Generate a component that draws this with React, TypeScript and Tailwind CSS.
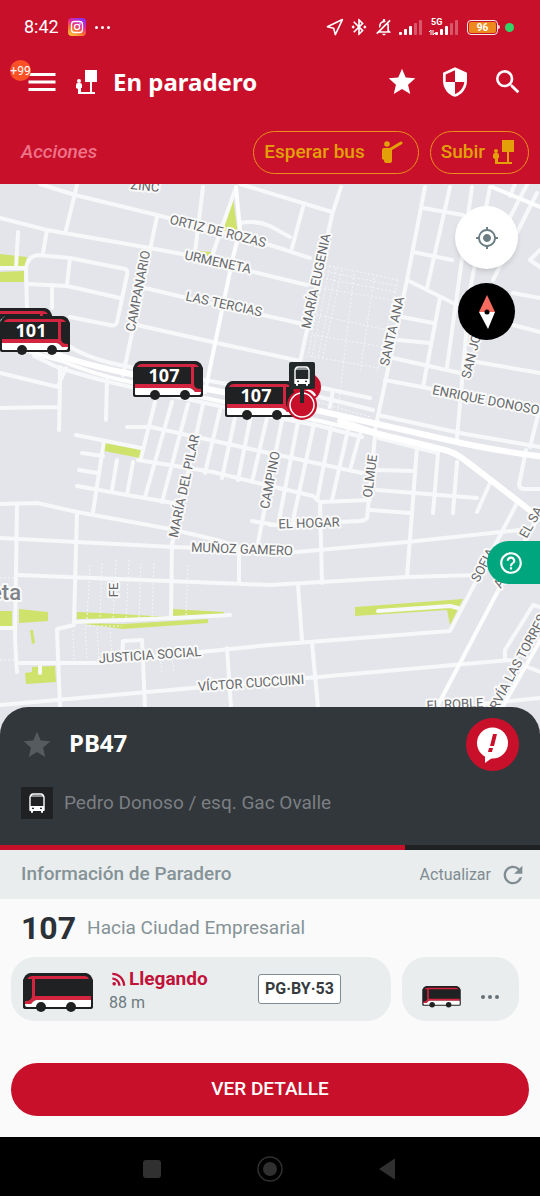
import React from 'react';
import {
  MdBluetoothConnected,
  MdHelpOutline,
  MdMenu,
  MdMyLocation,
  MdOutlineNotificationsOff,
  MdRefresh,
  MdRssFeed,
  MdSearch,
  MdSecurity,
  MdStar,
} from 'react-icons/md';
import { Navigation } from 'lucide-react';

interface MapLabel {
  text: string;
  x: number;
  y: number;
  angle: number;
}

const labels: MapLabel[] = [
  { text: 'ZINC', x: 145, y: 186, angle: 6 },
  { text: 'ORTIZ DE ROZAS', x: 218, y: 231, angle: 14 },
  { text: 'URMENETA', x: 218, y: 262, angle: 12 },
  { text: 'LAS TERCIAS', x: 224, y: 304, angle: 12 },
  { text: 'CAMPANARIO', x: 138, y: 291, angle: -79 },
  { text: 'MARÍA EUGENIA', x: 316, y: 281, angle: -78 },
  { text: 'SANTA ANA', x: 392, y: 331, angle: -77 },
  { text: 'SAN JOSÉ', x: 473, y: 349, angle: -76 },
  { text: 'ENRIQUE DONOSO', x: 486, y: 400, angle: 11 },
  { text: 'MARÍA DEL PILAR', x: 184, y: 486, angle: -78 },
  { text: 'CAMPINO', x: 270, y: 480, angle: -79 },
  { text: 'OLMUE', x: 370, y: 476, angle: -83 },
  { text: 'EL HOGAR', x: 309, y: 523, angle: -2 },
  { text: 'MUÑOZ GAMERO', x: 242, y: 549, angle: 2 },
  { text: 'FE', x: 113, y: 590, angle: -90 },
  { text: 'JUSTICIA SOCIAL', x: 150, y: 655, angle: -4 },
  { text: 'VÍCTOR CUCCUINI', x: 251, y: 683, angle: -4 },
  { text: 'SOFIA', x: 483, y: 565, angle: -62 },
  { text: 'EL SA', x: 531, y: 522, angle: -60 },
  { text: 'A', x: 499, y: 583, angle: -60 },
  { text: 'EL ROBLE', x: 455, y: 704, angle: -3 },
  { text: 'RVÍA LAS TORRES', x: 518, y: 662, angle: -62 },
];

const streets = [
  'M40 184L75 195L157 215L270 245L310 258',
  'M0 218L47 230L150 248L187 255L270 276L307 285',
  'M77 185L66 230M47 230L43 253M157 217L123 375M203 187L195 252',
  'M0 268H25M27 310L26 268Q28 256 38 255L70 258L125 269Q128 270 127 275L117 322Q116 327 110 325L70 317',
  'M27 284L67 286L120 298M70 258L67 285M52 287V308M18 232L16 268',
  'M145 288L187 298L303 324M137 325L217 343L300 361',
  'M235 190L213 253M240 223Q256 220 270 226L290 237M303 207L292 248M240 184L332 212',
  'M0 373L58 387M60 367V387L59 430M66 368L58 386M0 408L58 407M107 380L106 420',
  'M127 427L151 427L269 453L362 473M76 435L141 448M138 460L213 472L262 484L313 496L320 502L370 500',
  'M82 453L103 456M79 470L97 473M77 486L127 495L173 503M104 441L93 512M117 460L112 490M133 462L127 495',
  'M155 402L141 458M172 402L145 497M188 404L162 502M203 404L172 545',
  'M220 410L205 473M236 413L222 478M251 415L238 480M267 418L252 482M282 420L258 543',
  'M298 422L279 520M314 424L293 520M331 428L317 500M348 430L332 500M360 434L350 470',
  'M375 436L367 518Q366 520 360 521L270 525M417 447L412 513L407 577M438 453L433 513M457 462L453 513M490 483L477 512',
  'M377 470L413 471M377 490L477 498M370 510L410 513M379 438L438 453M252 521L275 525M320 502L322 583',
  'M0 504L37 503L77 512L170 529L217 540L245 549',
  'M0 538L173 547L297 552L407 542L520 530',
  'M17 575L270 585L407 577L477 575',
  'M17 505L15 640L17 672M77 512L74 623M172 543L171 617M239 552V583M298 585L302 640M312 643L318 707',
  'M77 622L172 618L230 615M74 625L57 629L60 707M0 628H15',
  'M20 663L97 663L200 652L270 645L450 631L517 503',
  'M122 660L123 641L142 640L145 707M227 648L231 707M0 705L193 688L307 678L510 660L540 672',
  'M540 607L533 605L505 650V660M480 704L540 698M378 611L450 606L458 608M40 666V673',
  'M341 187L332 215L300 362L294 390M425 187L407 280L375 430M450 187L427 288M472 187L447 367M440 298L423 387M490 187L470 290L457 438',
  'M413 252L452 260M423 208L463 215M407 280L457 305M402 317L433 323M398 340L430 343M393 358L460 373M385 380L427 388L480 398',
  'M477 362L540 373M513 293L540 298M513 325L540 332M537 193L493 280M540 250L530 260L540 267M378 415L460 433L540 447',
  'M540 407L530 447M323 388L370 398M320 397L373 410M333 390L330 407M526 450L519 485Q520 489 524 489H540M515 184L510 196M498 240L540 160',
  'M67 345Q90 360 130 367L210 381L300 396M34 356L57 367Q90 378 131 387L224 407L320 426L362 437',
];

const avenues = [
  'M236 187L240 230L233 257L205 392',
  'M437 707L500 587L545 505M492 187L540 207M478 750L545 632',
  'M20 348Q42 356 62 361Q95 375 131 382L224 402L320 421L379 435',
];

const highways = [
  'M40 348L64 357Q95 367 131 374L207 389L320 411L448 440Q490 450 545 457',
  'M340 421L379 434L441 449Q455 452 466 461L492 481L545 522',
];

const parks = [
  'M0 254L27 257L25 266H0ZM0 272L24 271V282H0Z',
  'M233 198L238 236L220 229ZM197 251L212 252V256H197Z',
  'M105 443L142 450L140 458L104 451Z',
  'M0 611H12V626H0ZM19 609L48 612V621L19 623ZM30 630H33L35 643L32 644Z',
  'M32 667L55 666L56 682L26 684L25 673L32 672Z',
  'M77 612L103 613L170 617L77 619ZM173 609L224 612V614L173 617ZM77 623L123 624L208 619V623L123 629Z',
  'M355 607L463 599L450 625L447 610L355 616Z',
];

const footpaths = [
  'M325 265L398 280M323 271L397 286M322 278L396 292M320 288L392 300M316 315L388 330M313 335L384 347M310 356L378 368',
  'M325 265L308 356M330 266L312 357M336 268L318 358M342 270L322 360M354 274L338 410M374 278L360 372M398 280L377 374M318 402L370 417',
  'M90 565L87 620M102 563L100 620M116 560L113 620M129 560L126 620M141 563L139 618M154 563L152 618M188 565L186 615',
  'M73 630L74 660M85 628L87 660M97 628L99 660M110 628L112 660M85 626H122M0 578H15M0 660H18M160 658L162 672M172 657L174 672',
];

// Side view of a city bus, facing left unless flipped.
const BusDrawing: React.FC<{ line?: string; flip?: boolean }> = ({ line, flip }) => (
  <>
    <g transform={flip ? 'matrix(-1 0 0 1 70 0)' : undefined}>
      <path d="M7 0H63Q68 1 70 7V34Q70 36 67 36H3Q0 36 0 34V7Q2 1 7 0Z" fill="#202122" />
      <path d="M4 6Q6 3 9 3H61Q65 3 66 6H12V23H68V27H14Q11 27 8 31H2V28Q9 28 9 23V6Z" fill="#d3253f" />
      <path d="M14 27H68V33Q68 34 67 34H4Q2 34 2 31H8Q11 27 14 27Z" fill="#fff" />
      <circle cx="18" cy="34" r="5" fill="#202122" />
      <circle cx="48" cy="34" r="5" fill="#202122" />
    </g>
    {line && (
      <text x="31" y="21" textAnchor="middle" fill="#fff" fontFamily="Noto Sans, sans-serif" fontWeight="700" fontSize="18">
        {line}
      </text>
    )}
  </>
);

const MapBus: React.FC<{ x: number; y: number; line?: string }> = ({ x, y, line }) => (
  <svg x={x} y={y} width="70" height="40" viewBox="0 0 70 40">
    <BusDrawing line={line} flip />
  </svg>
);

const StopIcon: React.FC<{ className?: string }> = ({ className }) => (
  <svg viewBox="0 0 21 25" className={className} fill="currentColor" aria-hidden="true">
    <path d="M9 0H21V12H16V22H19V24H2V19L0 18V15Q0 13 2 13H4Q6 13 6 15V18H5V22H14V12H9Z" />
    <circle cx="3" cy="11" r="2" />
  </svg>
);

const HailIcon: React.FC<{ className?: string }> = ({ className }) => (
  <svg viewBox="0 0 21 22" className={className} fill="currentColor" aria-hidden="true">
    <circle cx="5" cy="3" r="2.8" />
    <path d="M2 7H10V20Q10 22 8 22H4Q2 22 2 19L0 18V9Q0 7 2 7Z" />
    <path d="M8 8.500L19 2" stroke="currentColor" strokeWidth="3" strokeLinecap="round" />
  </svg>
);

const BusFront: React.FC<{ className?: string }> = ({ className }) => (
  <svg viewBox="0 0 16 20" className={className} aria-hidden="true">
    <path d="M4 1H12Q14 1 15 4V17H1V4Q2 1 4 1Z" fill="none" stroke="currentColor" strokeWidth="1.4" />
    <path d="M2 3H14" stroke="currentColor" />
    <path
      fillRule="evenodd"
      fill="currentColor"
      d="M1 13H15V18H14V19Q14 20 13 20T12 19V18H4V19Q4 20 3 20T2 19V18H1ZM4 14.5A1 1 0 1 0 4 16.5A1 1 0 1 0 4 14.5ZM12 14.5A1 1 0 1 0 12 16.5A1 1 0 1 0 12 14.5Z"
    />
  </svg>
);

const InstagramIcon = () => (
  <svg viewBox="0 0 18 18" className="size-[18px]" aria-hidden="true">
    <defs>
      <linearGradient id="insta" x1="0.2" y1="1" x2="0.7" y2="0">
        <stop offset="0" stopColor="#ffc83d" />
        <stop offset="0.35" stopColor="#fb6a33" />
        <stop offset="0.65" stopColor="#e5259b" />
        <stop offset="1" stopColor="#8c32ee" />
      </linearGradient>
    </defs>
    <rect width="18" height="18" rx="4" fill="url(#insta)" />
    <g fill="none" stroke="#fff" strokeWidth="1.3">
      <rect x="3.5" y="3.5" width="11" height="11" rx="3" />
      <circle cx="9" cy="9" r="2.6" />
    </g>
    <circle cx="12" cy="6" r="0.8" fill="#fff" />
  </svg>
);

const SignalBars = () => (
  <svg viewBox="0 0 23 15" className="h-[15px] w-[23px]" fill="#fff" aria-hidden="true">
    <rect x="0" y="12" width="3" height="3" rx="1" />
    <rect x="5" y="9" width="3" height="6" rx="1" />
    <rect x="10" y="6" width="3" height="9" rx="1" />
    <rect x="15" y="3" width="3" height="12" rx="1" opacity="0.3" />
    <rect x="20" y="0" width="3" height="15" rx="1" opacity="0.3" />
  </svg>
);

const StatusBar = () => (
  <div className="flex h-[54px] items-center justify-between pl-6 pr-[26px]">
    <div className="flex items-center gap-[9px]">
      <span className="text-lg">8:42</span>
      <InstagramIcon />
      <svg viewBox="0 0 15 3" className="h-[3px] w-[15px]" fill="#fff" aria-hidden="true">
        <circle cx="1.5" cy="1.5" r="1.5" />
        <circle cx="7.5" cy="1.5" r="1.5" />
        <circle cx="13.5" cy="1.5" r="1.5" />
      </svg>
    </div>
    <div className="flex items-center gap-[5px]">
      <Navigation className="size-[19px]" />
      <MdBluetoothConnected className="size-5" />
      <MdOutlineNotificationsOff className="size-5 -scale-x-100" />
      <SignalBars />
      <div className="relative ml-2">
        <SignalBars />
        <span className="absolute -left-1 -top-0.5 text-[9px] font-bold leading-[9px]">5G</span>
        <svg viewBox="0 0 6 5" className="absolute -left-1.5 bottom-0 h-[5px] w-[6px]" aria-hidden="true">
          <path d="M2 5V0L0 2M4 0V5L6 3" stroke="#fff" fill="none" />
        </svg>
      </div>
      <div className="flex items-center pl-1">
        <div className="flex h-[15px] w-[31px] rounded-[4px] border-[1.5px] border-white/90 p-px">
          <div className="flex flex-1 items-center justify-center rounded-[2px] bg-[#ee8a1d] text-[10px] font-bold">96</div>
        </div>
        <div className="h-1 w-0.5 rounded-r bg-white/80" />
      </div>
      <div className="size-[9px] rounded-full bg-[#32d468]" />
    </div>
  </div>
);

const Header = () => (
  <header className="bg-[#c8102b] text-white">
    <StatusBar />
    <div className="flex h-14 items-center pl-6 pr-4">
      <button aria-label="Menú" className="relative">
        <MdMenu className="size-9" />
        <span className="absolute -left-[14px] -top-1 flex size-[21px] items-center justify-center rounded-full bg-[#fb5127] text-xs">
          +99
        </span>
      </button>
      <StopIcon className="ml-4 h-[25px] w-[21px]" />
      <h1 className="ml-4 flex-1 font-['Noto_Sans',sans-serif] text-2xl font-bold">En paradero</h1>
      <div className="flex items-center gap-[21px]">
        <button aria-label="Favoritos">
          <MdStar className="size-8" />
        </button>
        <button aria-label="Seguridad">
          <MdSecurity className="size-8" />
        </button>
        <button aria-label="Buscar">
          <MdSearch className="size-8" />
        </button>
      </div>
    </div>
    <div className="flex h-[74px] items-center gap-[11px] pb-[11px] pl-[21px] pr-[11px] pt-[21px]">
      <span className="flex-1 text-[19px] font-medium italic text-[#ee7388]">Acciones</span>
      <button className="flex h-[43px] items-center gap-[17px] rounded-full border border-[#eb8e1c] pl-[10px] pr-[15px] text-[19px] font-medium text-[#e3a008]">
        Esperar bus
        <HailIcon className="h-[22px] w-[21px]" />
      </button>
      <button className="flex h-[43px] items-center gap-2 rounded-full border border-[#eb8e1c] pl-[10px] pr-[14px] text-[19px] font-medium text-[#e3a008]">
        Subir
        <StopIcon className="h-[25px] w-[21px]" />
      </button>
    </div>
  </header>
);

const StopMap = () => (
  <section className="relative h-[560px] overflow-hidden bg-[#e4e5ea]">
    <svg viewBox="0 184 540 560" preserveAspectRatio="xMidYMin slice" className="h-full w-full" aria-label="Mapa">
      <g fill="#cfe26c">
        {parks.map((d) => (
          <path key={d} d={d} />
        ))}
      </g>
      <g fill="none" stroke="#f5f6f7" strokeWidth="1" strokeDasharray="2 2">
        {footpaths.map((d) => (
          <path key={d} d={d} />
        ))}
      </g>
      <g fill="none" strokeLinecap="round" strokeLinejoin="round">
        <g stroke="#f7f8f9" strokeWidth="4">
          {streets.map((d) => (
            <path key={d} d={d} />
          ))}
        </g>
        <g stroke="#fdfdfd" strokeWidth="4">
          {avenues.map((d) => (
            <path key={d} d={d} />
          ))}
        </g>
        <g stroke="#fff" strokeWidth="6">
          {highways.map((d) => (
            <path key={d} d={d} />
          ))}
        </g>
      </g>
      <g
        fontFamily="Roboto, sans-serif"
        fontSize="13"
        fill="#66686b"
        stroke="#fafafa"
        strokeWidth="4"
        strokeLinejoin="round"
        paintOrder="stroke"
        textAnchor="middle"
        dominantBaseline="central"
      >
        {labels.map((l) => (
          <text key={l.text} transform={`translate(${l.x} ${l.y}) rotate(${l.angle})`}>
            {l.text}
          </text>
        ))}
        <text x="21" y="592" textAnchor="end" fontSize="22" fontWeight="500" fill="#808388">
          eta
        </text>
      </g>

      <MapBus x={-18} y={308} />
      <path d="M0 320L5 316L1 325Z" fill="#e6f3ea" stroke="#4a4d4f" />
      <MapBus x={0} y={316} line="101" />
      <MapBus x={133} y={361} line="107" />
      <MapBus x={225} y={381} line="107" />

      {/* current stop */}
      <circle cx="307" cy="387" r="14" fill="#c8102b" />
      <path d="M300 394Q310 388 315 396" stroke="#fff" strokeWidth="3" fill="none" />
      <circle cx="302" cy="405" r="15" fill="#c8102b" />
      <circle cx="302" cy="405" r="12" fill="none" stroke="#fff" strokeWidth="1.5" />
      <path d="M291 362H313Q315 362 315 364V387Q315 389 313 389H304V403H300V389H291Q289 389 289 387V364Q289 362 291 362Z" fill="#23282b" />
      <svg x="294" y="366" width="16" height="20" color="#fff">
        <BusFront />
      </svg>
    </svg>

    <button
      aria-label="Mi ubicación"
      className="absolute right-[22px] top-[22px] flex size-[63px] items-center justify-center rounded-full bg-white text-[#6c7e83] shadow-md"
    >
      <MdMyLocation className="size-6" />
    </button>
    <button aria-label="Brújula" className="absolute right-[25px] top-[99px] flex size-[57px] items-center justify-center rounded-full bg-black">
      <svg viewBox="0 0 16 34" className="h-[34px] w-4" aria-hidden="true">
        <path d="M8 0L16 17H0Z" fill="#f76c5e" />
        <path d="M0 17H16L9 34Z" fill="#fff" />
        <circle cx="8" cy="17" r="2.5" />
      </svg>
    </button>
    <button
      aria-label="Ayuda"
      className="absolute right-0 top-[357px] flex h-[43px] w-[53px] items-center rounded-l-full bg-[#00a67e] pl-[11px] text-white"
    >
      <MdHelpOutline className="size-[26px]" />
    </button>
  </section>
);

const StopCard = () => (
  <section className="relative -mt-[37px] rounded-t-[28px] bg-[#32373b]">
    <div className="flex items-center pl-[21px] pr-[21px] pt-[11px]">
      <button aria-label="Agregar a favoritos" className="text-[#565b5f]">
        <MdStar className="size-8" />
      </button>
      <h2 className="ml-4 flex-1 pb-1 font-['Noto_Sans',sans-serif] text-2xl font-bold text-white">PB47</h2>
      <button aria-label="Reportar" className="flex size-[53px] items-center justify-center rounded-full bg-[#c8102b]">
        <svg viewBox="0 0 31 36" className="h-9 w-[31px]" aria-hidden="true">
          <circle cx="15.5" cy="16" r="15.5" fill="#fff" />
          <path d="M8 28V36L15 31Z" fill="#fff" />
          <path d="M16 7H20L17 19H13ZM12 21H16L15 25H11Z" fill="#c8102b" />
        </svg>
      </button>
    </div>
    <div className="flex items-center gap-[11px] px-[21px] pb-[26px] pt-4">
      <div className="flex size-8 items-center justify-center bg-[#202122] text-white">
        <BusFront className="h-5 w-4" />
      </div>
      <p className="text-[19px] leading-7 text-[#7b7f83]">Pedro Donoso / esq. Gac Ovalle</p>
    </div>
    <div className="h-[5px] bg-[#202122]">
      <div className="h-full w-3/4 bg-[#c8102b]" />
    </div>
  </section>
);

const Arrivals = () => (
  <section className="bg-[#fafafa]">
    <div className="flex h-[49px] items-center justify-between bg-[#e9edee] pl-[21px] pr-[13px]">
      <h3 className="text-[19px] font-medium text-[#859296]">Información de Paradero</h3>
      <button className="flex items-center gap-2 text-base text-[#7f8c91]">
        Actualizar
        <MdRefresh className="size-7" />
      </button>
    </div>
    <div className="flex h-[58px] items-center gap-[11px] px-[21px]">
      <span className="text-[32px] font-bold text-[#2b3136]">107</span>
      <span className="text-[19px] text-[#859296]">Hacia Ciudad Empresarial</span>
    </div>
    <div className="flex gap-[11px] pl-[11px] pr-[21px]">
      <button className="flex h-16 flex-1 items-center rounded-[24px] bg-[#e9edee] pl-3 text-left">
        <svg viewBox="0 0 70 40" className="mt-2 h-10 w-[70px]" aria-hidden="true">
          <BusDrawing />
        </svg>
        <span className="ml-4 flex w-[149px] flex-col">
          <span className="flex items-center text-[19px] font-bold leading-7 text-[#c1123a]">
            <MdRssFeed className="size-5" />
            Llegando
          </span>
          <span className="text-base leading-5 text-[#6d7b80]">88 m</span>
        </span>
        <span className="rounded-[3px] border border-[#7e8b91] bg-white px-[6px] py-[2px] text-base font-bold text-[#363b3f]">
          PG·BY·53
        </span>
      </button>
      <button aria-label="Más buses" className="flex h-16 w-[117px] items-center justify-between rounded-[24px] bg-[#e9edee] px-5 pt-4">
        <svg viewBox="0 0 70 40" className="h-[22px] w-[39px]" aria-hidden="true">
          <BusDrawing />
        </svg>
        <svg viewBox="0 0 18 4" className="h-1 w-[18px]" fill="#667177" aria-hidden="true">
          <circle cx="2" cy="2" r="2" />
          <circle cx="9" cy="2" r="2" />
          <circle cx="16" cy="2" r="2" />
        </svg>
      </button>
    </div>
    <div className="px-[11px] pb-[21px] pt-[42px]">
      <button className="h-[53px] w-full rounded-full bg-[#c8102b] text-[19px] font-medium text-white">VER DETALLE</button>
    </div>
  </section>
);

const NavigationBar = () => (
  <nav className="flex h-[59px] items-center justify-center gap-[92px] bg-black pt-1">
    <button aria-label="Recientes">
      <svg viewBox="0 0 26 26" className="size-[26px]">
        <rect x="4" y="4" width="18" height="18" rx="3" fill="#303030" />
      </svg>
    </button>
    <button aria-label="Inicio">
      <svg viewBox="0 0 26 26" className="size-[26px]">
        <circle cx="13" cy="13" r="12" fill="none" stroke="#303030" strokeWidth="1.5" />
        <circle cx="13" cy="13" r="7" fill="#303030" />
      </svg>
    </button>
    <button aria-label="Atrás">
      <svg viewBox="0 0 26 26" className="size-[26px]">
        <path d="M4 13L19 3Q20 2 20 4V22Q20 24 19 23Z" fill="#303030" />
      </svg>
    </button>
  </nav>
);

export default function App() {
  return (
    <div className="min-h-screen bg-white font-['Roboto',sans-serif]">
      <Header />
      <main>
        <StopMap />
        <StopCard />
        <Arrivals />
      </main>
      <NavigationBar />
    </div>
  );
}
